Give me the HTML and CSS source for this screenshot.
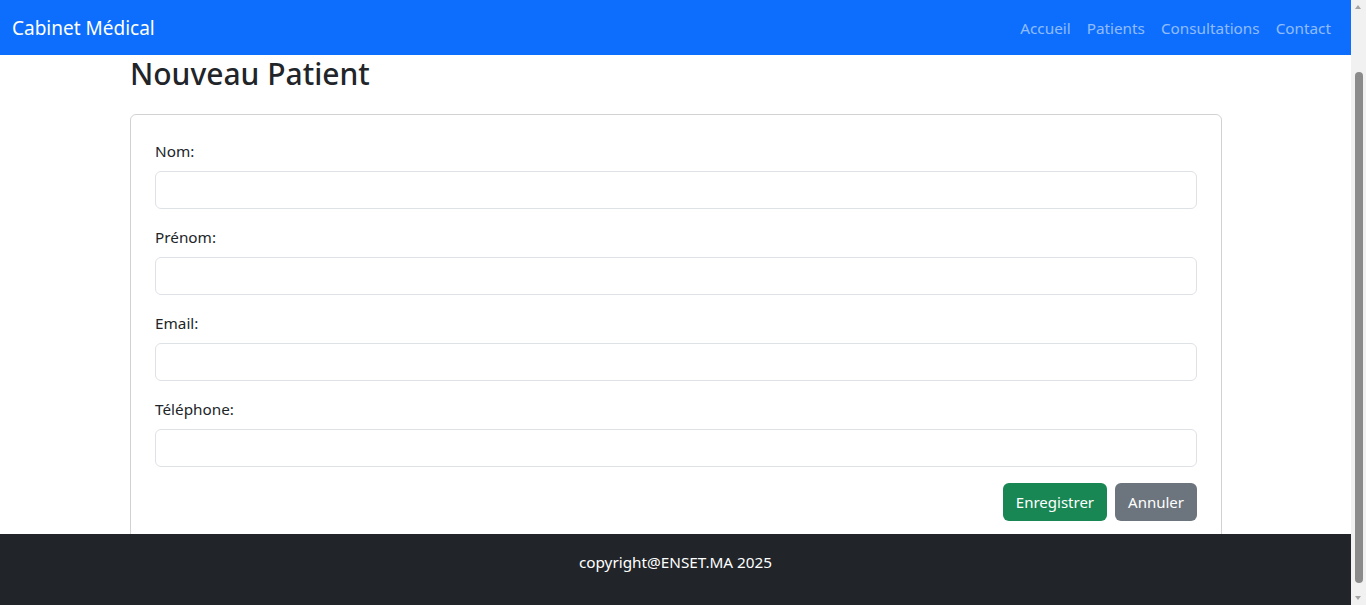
FILE: index.html
```html
<!DOCTYPE html>
<html lang="fr">
<head>
<meta charset="utf-8">
<title>Cabinet Médical</title>
<link rel="stylesheet" href="styles.css">
</head>
<body>
<div class="page">
  <nav class="navbar">
    <a class="brand" href="#">Cabinet Médical</a>
    <ul class="nav">
      <li><a href="#">Accueil</a></li>
      <li><a href="#">Patients</a></li>
      <li><a href="#">Consultations</a></li>
      <li><a href="#">Contact</a></li>
    </ul>
  </nav>
  <main class="container">
    <h1 class="title">Nouveau Patient</h1>
    <div class="card">
      <form class="card-body">
        <div class="field">
          <label for="nom">Nom:</label>
          <input id="nom" type="text">
        </div>
        <div class="field">
          <label for="prenom">Prénom:</label>
          <input id="prenom" type="text">
        </div>
        <div class="field">
          <label for="email">Email:</label>
          <input id="email" type="email">
        </div>
        <div class="field">
          <label for="tel">Téléphone:</label>
          <input id="tel" type="text">
        </div>
        <div class="actions">
          <button type="submit" class="btn btn-success">Enregistrer</button>
          <button type="button" class="btn btn-secondary">Annuler</button>
        </div>
      </form>
    </div>
  </main>
  <footer class="footer">
    <p>copyright@ENSET.MA 2025</p>
  </footer>
</div>
<div class="scrollbar" aria-hidden="true">
  <span class="arrow arrow-up"></span>
  <span class="track"><span class="thumb"></span></span>
  <span class="arrow arrow-down"></span>
</div>
</body>
</html>
```
FILE: styles.css
```css
body {
  margin: 0;
  font-family: "Noto Sans", "Segoe UI", "Liberation Sans", sans-serif;
  font-size: 15.3px;
  line-height: 24px;
  color: #212529;
  background: #fff;
}
.page {
  margin-right: 15px;
}
.navbar {
  background: #0d6efd;
  height: 55px;
  display: flex;
  align-items: center;
  justify-content: space-between;
  padding: 0 12px;
  box-sizing: border-box;
}
.brand {
  color: #fff;
  font-size: 19px;
  text-decoration: none;
  line-height: 30px;
}
.nav {
  display: flex;
  list-style: none;
  margin: 0;
  padding: 0;
}
.nav a {
  display: block;
  padding: 8px;
  color: rgba(255, 255, 255, 0.55);
  text-decoration: none;
}
.container {
  width: 1092px;
  margin: 0 auto 0 130px;
}
.title {
  font-size: 30px;
  font-weight: 500;
  line-height: 38px;
  margin: 0 0 21px;
}
.card {
  border: 1px solid rgba(0, 0, 0, 0.175);
  border-radius: 6px;
}
.card-body {
  padding: 24px;
  display: flex;
  flex-direction: column;
  gap: 16px;
}
.field label {
  display: block;
  margin-bottom: 8px;
}
.field input {
  display: block;
  width: 100%;
  box-sizing: border-box;
  height: 38px;
  border: 1px solid #dee2e6;
  border-radius: 6px;
  font: inherit;
  padding: 6px 12px;
}
.actions {
  display: flex;
  justify-content: flex-end;
  gap: 8px;
}
.btn {
  font: inherit;
  font-size: 15px;
  color: #fff;
  border: 1px solid transparent;
  border-radius: 6px;
  padding: 6px 12px;
  height: 38px;
}
.btn-success {
  background: #198754;
}
.btn-secondary {
  background: #6c757d;
}
.footer {
  position: fixed;
  left: 0;
  right: 15px;
  bottom: 0;
  height: 71px;
  background: #212529;
  color: #fff;
  text-align: center;
  padding-top: 16px;
  box-sizing: border-box;
}
.footer p {
  margin: 0;
}
.scrollbar {
  position: fixed;
  top: 0;
  right: 0;
  bottom: 0;
  width: 15px;
  background: #f1f1f1;
  display: flex;
  flex-direction: column;
  align-items: center;
}
.arrow {
  height: 15px;
  width: 15px;
  position: relative;
}
.arrow::after {
  content: "";
  position: absolute;
  left: 4px;
  border-left: 3.5px solid transparent;
  border-right: 3.5px solid transparent;
}
.arrow-up::after {
  top: 5px;
  border-bottom: 4px solid #a3a3a3;
}
.arrow-down::after {
  top: 6px;
  border-top: 4px solid #a3a3a3;
}
.track {
  flex: 1;
  width: 15px;
  display: flex;
  flex-direction: column;
  align-items: center;
  padding: 57px 0 7px;
  box-sizing: border-box;
}
.thumb {
  flex: 1;
  width: 8px;
  background: #8b8b8b;
  border-radius: 4px;
}
```
